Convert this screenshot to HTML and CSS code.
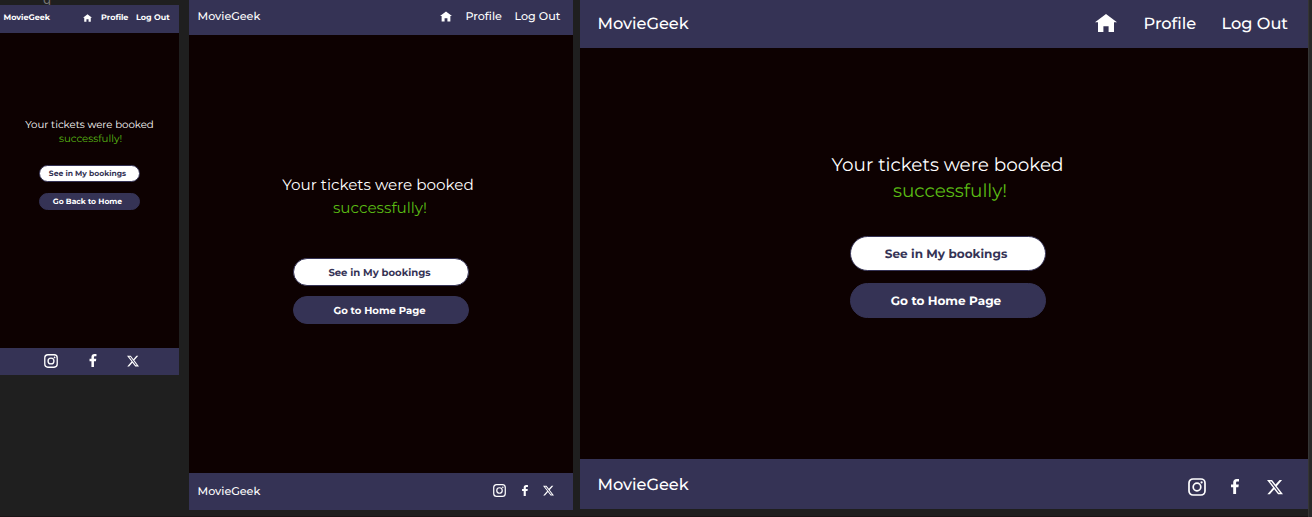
FILE: index.html
```html
<!DOCTYPE html>
<html lang="en">
<head>
<meta charset="utf-8">
<title>MovieGeek</title>
<link rel="stylesheet" href="styles.css">
</head>
<body>
<svg class="sprite" aria-hidden="true">
  <symbol id="home" viewBox="0 0 22 18"><path d="M11 0 22 8.2H19V18H13.6V12.2H8.4V18H3V8.2H0Z" fill="currentColor"/></symbol>
  <symbol id="instagram" viewBox="0 0 18 18"><rect x="1" y="1" width="16" height="16" rx="4" fill="none" stroke="currentColor" stroke-width="1.7"/><circle cx="9" cy="9" r="3.8" fill="none" stroke="currentColor" stroke-width="1.7"/><circle cx="13.6" cy="4.4" r="1.1" fill="currentColor"/></symbol>
  <symbol id="facebook" viewBox="0 0 8 15"><path d="M2.2 15V8.3H0V5.6H2.2V3.6C2.2 1.2 3.5 0 5.6 0L8 .1V2.6H6.5C5.3 2.6 5.1 3.1 5.1 3.9V5.6H7.8L7.4 8.3H5.1V15Z" fill="currentColor"/></symbol>
  <symbol id="x" viewBox="0 0 24 24"><path d="M18.9 1.5h3.7l-8 9.2L24 22.8h-7.4l-5.8-7.5-6.6 7.5H.5l8.6-9.8L0 1.5h7.6l5.2 6.9zm-1.3 19.1h2L6.5 3.6H4.3z" fill="currentColor"/></symbol>
</svg>
<div class="canvas">
  <div class="phone-column">
    <div class="canvas-label">g</div>
    <section class="frame phone">
      <header class="bar"><span class="brand">MovieGeek</span><svg class="home"><use href="#home"/></svg><span class="profile">Profile</span><span class="logout">Log Out</span></header>
      <main class="content">
        <p class="message">Your tickets were booked</p>
        <p class="success">successfully!</p>
        <a class="button light"><span>See in My bookings</span></a>
        <a class="button dark"><span>Go Back to Home</span></a>
      </main>
      <footer class="bar foot"><svg class="instagram"><use href="#instagram"/></svg><svg class="facebook"><use href="#facebook"/></svg><svg class="x"><use href="#x"/></svg></footer>
    </section>
  </div>
  <section class="frame tablet">
    <header class="bar"><span class="brand">MovieGeek</span><svg class="home"><use href="#home"/></svg><span class="profile">Profile</span><span class="logout">Log Out</span></header>
    <main class="content">
      <p class="message">Your tickets were booked</p>
      <p class="success">successfully!</p>
      <a class="button light"><span>See in My bookings</span></a>
      <a class="button dark"><span>Go to Home Page</span></a>
    </main>
    <footer class="bar foot"><span class="brand">MovieGeek</span><svg class="instagram"><use href="#instagram"/></svg><svg class="facebook"><use href="#facebook"/></svg><svg class="x"><use href="#x"/></svg></footer>
  </section>
  <section class="frame desktop">
    <header class="bar"><span class="brand">MovieGeek</span><svg class="home"><use href="#home"/></svg><span class="profile">Profile</span><span class="logout">Log Out</span></header>
    <main class="content">
      <p class="message">Your tickets were booked</p>
      <p class="success">successfully!</p>
      <a class="button light"><span>See in My bookings</span></a>
      <a class="button dark"><span>Go to Home Page</span></a>
    </main>
    <footer class="bar foot"><span class="brand">MovieGeek</span><svg class="instagram"><use href="#instagram"/></svg><svg class="facebook"><use href="#facebook"/></svg><svg class="x"><use href="#x"/></svg></footer>
  </section>
  <div class="edge"></div>
</div>
</body>
</html>
```
FILE: styles.css
```css
* { box-sizing: border-box; }
body { margin: 0; overflow: hidden; background: #1f1f1f; color: #fff; font-family: Montserrat, Inter, sans-serif; text-rendering: geometricPrecision; }
.sprite { display: none; }
.canvas { display: flex; align-items: flex-start; width: 1312px; height: 517px; border-bottom: 1px solid #1b1416; }
.phone-column { width: 179px; flex: none; }
.canvas-label { height: 5px; padding-left: 43px; line-height: 0; font-family: Inter, sans-serif; font-size: 13px; color: #777; }
.frame { display: flex; flex-direction: column; flex: none; background: #0d0101; white-space: nowrap; }
.bar { display: flex; align-items: flex-start; flex: none; background: #353355; }
.bar svg { flex: none; display: block; }
.brand { flex: none; }
.content { display: flex; flex-direction: column; align-items: center; flex: 1; }
.message, .success { margin: 0; }
.success { color: #5abb14; }
.button { display: flex; align-items: center; justify-content: center; border: 1px solid #353355; border-radius: 99px; font-weight: 700; }
.light { background: #fff; color: #353355; }
.dark { background: #353355; }

.phone { height: 370px; }
.phone .bar { height: 28px; padding-left: 3.5px; font-size: 8px; font-weight: 700; line-height: 27px; }
.phone .brand { width: 79px; }
.phone .home { width: 9px; height: 8px; margin-top: 9px; }
.phone .profile { margin-left: 9.5px; width: 35px; }
.phone .message, .phone .success { font-size: 10.2px; line-height: 14px; }
.phone .message { margin-top: 85px; }
.phone .success { margin-left: 2px; }
.phone .button { width: 101px; height: 17px; margin-right: 1px; font-size: 7.6px; padding-right: 3px; }
.phone .light { margin-top: 19px; }
.phone .dark { margin-top: 11px; }
.phone .foot { height: 27px; padding-left: 44px; }
.phone .instagram { width: 14px; height: 14px; margin-top: 6px; }
.phone .facebook { width: 8px; height: 13px; margin: 6px 0 0 31px; }
.phone .x { width: 12px; height: 12px; margin: 7px 0 0 30px; }

.tablet { width: 384px; height: 510px; margin-left: 10px; }
.tablet .bar { height: 35px; padding-left: 8.5px; font-size: 11.15px; font-weight: 500; line-height: 33px; }
.tablet .brand { width: 242px; }
.tablet .home { width: 12px; height: 11px; margin-top: 11px; }
.tablet .profile { margin-left: 14px; width: 49px; }
.tablet .message, .tablet .success { font-size: 15.2px; line-height: 23px; }
.tablet .message { margin: 138px 6px 0 0; }
.tablet .success { margin-right: 2px; }
.tablet .button { width: 176px; height: 28px; font-size: 10.05px; font-weight: 700; padding-right: 3px; }
.tablet .light { margin-top: 39px; }
.tablet .dark { margin-top: 10px; }
.tablet .foot { height: 37px; line-height: 36px; }
.tablet .foot .brand { width: 295px; }
.tablet .instagram { width: 13px; height: 13px; margin-top: 11px; }
.tablet .facebook { width: 6px; height: 11px; margin: 12px 0 0 16px; }
.tablet .x { width: 11px; height: 11px; margin: 12px 0 0 15px; }

.desktop { width: 728px; height: 509px; margin-left: 7px; }
.desktop .bar { height: 48px; padding-left: 17.5px; font-size: 16.2px; font-weight: 500; line-height: 48px; }
.desktop .brand { width: 497px; }
.desktop .home { width: 22px; height: 18px; margin-top: 14px; }
.desktop .profile { margin-left: 27px; width: 78px; }
.desktop .message, .desktop .success { font-size: 18.4px; line-height: 26px; }
.desktop .message { margin: 104px 0 0 7px; }
.desktop .success { margin-left: 12px; }
.desktop .button { width: 196px; height: 35px; margin-left: 7px; padding: 2px 3px 0 0; font-size: 12.05px; font-weight: 700; }
.desktop .light { margin-top: 32px; }
.desktop .dark { margin-top: 12px; }
.desktop .foot { height: 50px; line-height: 53px; }
.desktop .foot .brand { width: 590px; }
.desktop .instagram { width: 18px; height: 18px; margin-top: 19px; }
.desktop .facebook { width: 8px; height: 15px; margin: 20px 0 0 25px; }
.desktop .x { width: 16px; height: 16px; margin: 20px 0 0 28px; }
.edge { width: 4px; height: 517px; background: #292929; border-left: 1px solid #353535; }
```
